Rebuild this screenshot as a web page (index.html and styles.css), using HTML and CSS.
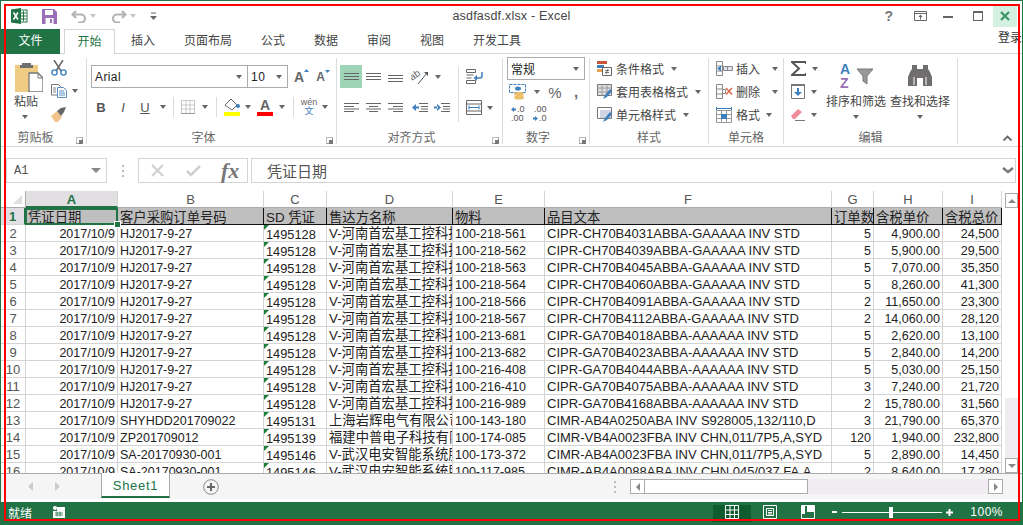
FILE: index.html
```html
<!DOCTYPE html>
<html lang="zh-CN">

<head>
  <meta charset="UTF-8">
  <title>asdfasdf.xlsx - Excel</title>
  <link rel="stylesheet" href="styles.css">
</head>

<body>
  <div class="window">
    <header class="titlebar">
      <div class="qat">
        <svg class="qat-excel" width="17" height="16" viewBox="0 0 17 16"><rect x="8" y="2" width="8" height="12" fill="#fff" stroke="#217346"/><path d="M10 5h5M10 8h5M10 11h5M12.5 3v10" stroke="#217346"/><path d="M0 1.5 10 0v16L0 14.500z" fill="#217346"/><path d="M2.500 4.500 7 11.500M7 4.500 2.500 11.500" stroke="#fff" stroke-width="1.600"/></svg>
        <svg class="qat-save" width="15" height="15" viewBox="0 0 15 15"><path d="M0 0h12l3 3v12H0z" fill="#9a6fb8"/><rect x="3" y="1" width="8" height="5" fill="#fff"/><rect x="3.500" y="9" width="8" height="6" fill="#fff"/><rect x="8" y="10" width="2" height="4" fill="#9a6fb8"/></svg>
        <svg class="qat-undo" width="16" height="13" viewBox="0 0 16 13"><path d="M5 1 1.500 4.500 5 8M2 4.500h8a4 4 0 0 1 0 8H7" fill="none" stroke="#b4b4b4" stroke-width="2.200"/></svg>
        <span class="tri tri-light"></span>
        <svg class="qat-redo" width="16" height="13" viewBox="0 0 16 13"><path d="M11 1l3.500 3.500L11 8M14 4.500H6a4 4 0 0 0 0 8h3" fill="none" stroke="#b4b4b4" stroke-width="2.200"/></svg>
        <span class="tri tri-light"></span>
        <svg class="qat-more" width="7" height="8" viewBox="0 0 7 8"><path d="M1 1h5" stroke="#666"/><path d="M0 4h7L3.500 8z" fill="#666"/></svg>
      </div>
      <div class="doc-title">asdfasdf.xlsx - Excel</div>
      <div class="win-btns">
        <span class="win-help">?</span>
        <svg class="win-icon" width="13" height="10" viewBox="0 0 13 10"><path d="M.5.500h12v9H.5zM1 2.500h11" fill="none" stroke="#666"/><path d="M6.500 3.500 4.500 6h4zM6 6h1v2.500H6z" fill="#666"/></svg>
        <span class="win-min"></span>
        <span class="win-max"></span>
        <span class="win-close">
          <svg width="10" height="10" viewBox="0 0 10 10"><path d="M1 1l8 8M9 1 1 9" stroke="#3f9463" stroke-width="2.200"/></svg>
        </span>
      </div>
    </header>

    <nav class="tabs">
      <div class="tab-file">文件</div>
      <div class="tab-active">开始</div>
      <div class="tab-list">
        <span>插入</span>
        <span>页面布局</span>
        <span>公式</span>
        <span>数据</span>
        <span>审阅</span>
        <span>视图</span>
        <span>开发工具</span>
      </div>
      <div class="login">登录</div>
    </nav>

    <section class="ribbon">
      <div class="group group-clip">
        <div class="group-body clip-body">
          <div class="paste">
            <svg width="29" height="30" viewBox="0 0 29 30"><path d="M1 3h23v27H1z" fill="#f0cb83"/><path d="M8 3V1h9v2h2v3H6V3z" fill="#6f6f6f"/><path d="M15 11h9l5 5v14H15z" fill="#fff" stroke="#777" stroke-width="1.300"/><path d="M24 11v5h5" fill="none" stroke="#777"/></svg>
            <span>粘贴</span>
            <i class="tri"></i>
          </div>
          <div class="clip-tools">
            <svg width="16" height="16" viewBox="0 0 16 16"><path d="M3 0l7 11M12 0 5 11" stroke="#666" stroke-width="1.500"/><circle cx="3.500" cy="12.500" r="2.600" fill="none" stroke="#3e7fbd" stroke-width="1.400"/><circle cx="12.500" cy="12.500" r="2.600" fill="none" stroke="#3e7fbd" stroke-width="1.400"/></svg>
            <div class="copy-row">
              <svg width="16" height="14" viewBox="0 0 16 14"><path d="M.5.500h7l2 2V11H.5z" fill="#fff" stroke="#777"/><path d="M6.500 3.500h6l3 3v7h-9z" fill="#fff" stroke="#5b8fc4"/><path d="M2 4h3M2 6h3M2 8h3" stroke="#888"/><path d="M8 7h5M8 9h6M8 11h6" stroke="#5b8fc4"/></svg>
              <i class="tri"></i>
            </div>
            <svg width="16" height="15" viewBox="0 0 16 15"><path d="M0 9l6-5 5 6-4 5H4z" fill="#f0c48a"/><path d="M6 4l4-3 5-1-2 5-3 4z" fill="#666"/></svg>
          </div>
        </div>
        <div class="group-label has-launcher">剪贴板<b class="launcher"></b></div>
      </div>

      <div class="group group-font">
        <div class="group-body">
          <div class="font-row1">
            <div class="combo font-name"><span>Arial</span><i class="tri"></i></div>
            <div class="combo font-size"><span>10</span><i class="tri"></i></div>
            <div class="grow-a">A<svg width="5" height="3" viewBox="0 0 5 3"><path d="M0 3h5L2.500 0z" fill="#3e7fbd"/></svg></div>
            <div class="shrink-a">A<svg width="5" height="3" viewBox="0 0 5 3"><path d="M0 0h5L2.500 3z" fill="#3e7fbd"/></svg></div>
          </div>
          <div class="font-row2">
            <span class="fmt-b">B</span>
            <span class="fmt-i">I</span>
            <span class="fmt-u">U</span>
            <i class="tri"></i>
            <b class="vdiv"></b>
            <svg width="14" height="14" viewBox="0 0 14 14"><path d="M.5.500h13v13H.5zM5 .5v13M9 .5v13M.5 5h13M.5 9h13" fill="none" stroke="#999" stroke-dasharray="1 1"/><path d="M0 13.500h14" stroke="#999"/></svg>
            <i class="tri"></i>
            <b class="vdiv"></b>
            <div class="fill-btn">
              <svg width="16" height="12" viewBox="0 0 16 12"><path d="M1 6l6-6 6 6-5 5z" fill="#fff" stroke="#666"/><circle cx="14" cy="7" r="2" fill="#3e7fbd"/></svg>
              <b class="swatch swatch-yellow"></b>
            </div>
            <i class="tri"></i>
            <div class="color-btn">
              <span>A</span>
              <b class="swatch swatch-red"></b>
            </div>
            <i class="tri"></i>
            <b class="vdiv"></b>
            <div class="wen"><span>wén</span><em>文</em></div>
            <i class="tri"></i>
          </div>
        </div>
        <div class="group-label has-launcher">字体<b class="launcher"></b></div>
      </div>

      <div class="group group-align">
        <div class="group-body align-body">
          <div class="align-left">
            <div class="align-row1">
              <span class="align-on"><svg width="15" height="7" viewBox="0 0 15 7"><path d="M0 .5h15M0 3.500h15M0 6.500h15" stroke="#666"/></svg></span>
              <svg width="15" height="7" viewBox="0 0 15 7"><path d="M0 .5h15M0 3.500h15M0 6.500h15" stroke="#666"/></svg>
              <svg class="align-low" width="15" height="7" viewBox="0 0 15 7"><path d="M0 .5h15M0 3.500h15M0 6.500h15" stroke="#666"/></svg>
              <svg width="17" height="15" viewBox="0 0 17 15"><text class="orient-text" transform="translate(1 12) rotate(-35)">ab</text><path d="M7 15 16 4" stroke="#555"/><path d="M13 3h4v4z" fill="#555"/></svg>
              <i class="tri"></i>
            </div>
            <div class="align-row2">
              <svg width="15" height="9" viewBox="0 0 15 9"><path d="M0 .5h15M0 3.500h10M0 6h15M0 8.500h10" stroke="#666"/></svg>
              <svg width="15" height="9" viewBox="0 0 15 9"><path d="M0 .5h15M3 3.500h9M0 6h15M3 8.500h9" stroke="#666"/></svg>
              <svg width="15" height="9" viewBox="0 0 15 9"><path d="M0 .5h15M5 3.500h10M0 6h15M5 8.500h10" stroke="#666"/></svg>
              <svg width="16" height="9" viewBox="0 0 16 9"><path d="M7 .5h9M9 3.500h7M9 6h7M7 8.500h9" stroke="#666"/><path d="M0 4.500 4 1v7zM3 3.500h4v2H3z" fill="#3e7fbd"/></svg>
              <svg width="16" height="9" viewBox="0 0 16 9"><path d="M7 .5h9M9 3.500h7M9 6h7M7 8.500h9" stroke="#666"/><path d="M7 4.500 3 1v7zM0 3.500h4v2H0z" fill="#3e7fbd"/></svg>
            </div>
          </div>
          <b class="vdiv vdiv-tall"></b>
          <div class="align-right">
            <svg width="17" height="15" viewBox="0 0 17 15"><path d="M.5.500h9v3h-9zM.5 6h7M.5 9h5M.5 11.500h9v3h-9z" fill="none" stroke="#666"/><path d="M16 3v4a2 2 0 0 1-2 2H9" fill="none" stroke="#3e7fbd" stroke-width="1.500"/><path d="M11 6 7.500 9l3.500 3z" fill="#3e7fbd"/></svg>
            <div class="merge-row">
              <svg width="16" height="15" viewBox="0 0 16 15"><path d="M.5.500h15v14H.5zM.5 4h15M.5 11h15" fill="none" stroke="#666"/><path d="M3 7.500h10" stroke="#3e7fbd"/><path d="M3 5.500v4M13 5.500v4" stroke="#3e7fbd"/></svg>
              <i class="tri"></i>
            </div>
          </div>
        </div>
        <div class="group-label has-launcher">对齐方式<b class="launcher"></b></div>
      </div>

      <div class="group group-number">
        <div class="group-body">
          <div class="combo num-format"><span>常规</span><i class="tri"></i></div>
          <div class="num-row1">
            <svg width="17" height="16" viewBox="0 0 17 16"><path d="M.5.500h16v8H.5z" fill="#fff" stroke="#3e7fbd" stroke-dasharray="3 1"/><ellipse cx="9" cy="4.500" rx="3" ry="2" fill="#3e7fbd"/><ellipse cx="10" cy="10" rx="5" ry="2" fill="#eebf6a"/><ellipse cx="10" cy="13.500" rx="5" ry="2" fill="#eebf6a"/></svg>
            <i class="tri"></i>
            <span class="pct">%</span>
            <span class="comma">,</span>
          </div>
          <div class="num-row2">
            <div class="dec"><svg width="5" height="5" viewBox="0 0 5 5"><path d="M0 2.500 3 0v1.500h2v2H3V5z" fill="#3e7fbd"/></svg><span>.0</span><span class="dec-low">.00</span></div>
            <div class="dec"><span class="dec-first">.00</span><svg width="5" height="5" viewBox="0 0 5 5"><path d="M5 2.500 2 0v1.500H0v2h2V5z" fill="#3e7fbd"/></svg><span>.0</span></div>
          </div>
        </div>
        <div class="group-label has-launcher">数字<b class="launcher"></b></div>
      </div>

      <div class="group group-styles">
        <div class="group-body">
          <div class="list-row">
            <svg width="15" height="15" viewBox="0 0 15 15"><path d="M0 0h10v3H0z" fill="#c8553a"/><path d="M0 4h7v3H0z" fill="#3e7fbd"/><path d="M0 8h5v3H0z" fill="#e6a050"/><path d="M5.500 6.500h9v8h-9z" fill="#fff" stroke="#666"/><path d="M8 9.500h4M8 11.500h4M11 8l-2 5" stroke="#555" stroke-width=".8"/></svg>
            <span>条件格式</span><i class="tri"></i>
          </div>
          <div class="list-row">
            <svg width="15" height="15" viewBox="0 0 15 15"><path d="M.5.500h14v11H.5z" fill="#dfdfe6" stroke="#777"/><path d="M5 .5v11M10 .5v11M.5 4h14M.5 8h14" stroke="#999"/><path d="M6 15l2-4 5-6 2 2-5 6z" fill="#3e7fbd"/></svg>
            <span>套用表格格式</span><i class="tri"></i>
          </div>
          <div class="list-row">
            <svg width="15" height="15" viewBox="0 0 15 15"><path d="M.5.500h14v11H.5z" fill="#fff" stroke="#777"/><path d="M3 3h11v8H3z" fill="#cfd3e4"/><path d="M6 15l2-4 5-6 2 2-5 6z" fill="#3e7fbd"/></svg>
            <span>单元格样式</span><i class="tri"></i>
          </div>
        </div>
        <div class="group-label">样式</div>
      </div>

      <div class="group group-cells">
        <div class="group-body">
          <div class="list-row">
            <svg width="17" height="15" viewBox="0 0 17 15"><path d="M.5.500h6v14h-6zM.5 5h6M.5 10h6" fill="none" stroke="#888"/><path d="M7.500 5.500h9v4h-9zM11.500 5.500v4" fill="#dfe4ec" stroke="#888"/><path d="M1 7.500 5 4.500v6z" fill="#3e7fbd"/></svg>
            <span>插入</span><i class="tri"></i>
          </div>
          <div class="list-row">
            <svg width="17" height="15" viewBox="0 0 17 15"><path d="M.5.500h6v14h-6zM.5 5h6M.5 10h6M6.500 5.500h3v4h-3z" fill="none" stroke="#888"/><path d="M10 4l6 6.500M16 4l-6 6.500" stroke="#e2694b" stroke-width="1.500"/></svg>
            <span>删除</span><i class="tri"></i>
          </div>
          <div class="list-row">
            <svg width="17" height="16" viewBox="0 0 17 16"><path d="M.5 0v3M15.500 0v3M1 1.500h14" stroke="#3e7fbd"/><path d="M.5 3.500h15v12H.5zM5.500 3.500v12M10.500 3.500v12M.5 7.500h15M.5 11.500h15" fill="none" stroke="#999"/><path d="M5 7h6v5H5z" fill="#3e7fbd"/></svg>
            <span>格式</span><i class="tri tri-near"></i>
          </div>
        </div>
        <div class="group-label">单元格</div>
      </div>

      <div class="group group-edit">
        <div class="group-body edit-body">
          <div class="edit-tools">
            <div class="edit-row"><svg width="15" height="15" viewBox="0 0 15 15"><path d="M15 3V1H1l7 6.500L1 14h14v-2" fill="none" stroke="#555" stroke-width="2"/></svg><i class="tri"></i></div>
            <div class="edit-row"><svg width="14" height="15" viewBox="0 0 14 15"><path d="M.5.500h13v14H.5z" fill="#fff" stroke="#777"/><path d="M0 0h14v2H0z" fill="#777"/><path d="M6 4h2v4h3l-4 4-4-4h3z" fill="#3e7fbd"/></svg><i class="tri"></i></div>
            <div class="edit-row"><svg width="14" height="13" viewBox="0 0 14 13"><path d="M0 8l7-7 4 3-7 7H2z" fill="#ee8c9c"/><path d="M4 12.500h10" stroke="#777"/></svg><i class="tri"></i></div>
          </div>
          <div class="big-btn big-sort">
            <svg width="31" height="28" viewBox="0 0 31 28"><path d="M15 7h16l-6 7v8l-4-3v-5z" fill="#999" stroke="#777"/></svg>
            <span class="sort-a">A</span>
            <span class="sort-z">Z</span>
            <span class="big-text">排序和筛选</span>
            <i class="tri"></i>
          </div>
          <div class="big-btn">
            <svg width="26" height="28" viewBox="0 0 26 28"><path d="M5 3h5v4h6V3h5v4l2 3 2 5v9h-9v-8h-6v8H1v-9l2-5 2-3z" fill="#706d6e"/><path d="M7 15v8M19 15v8" stroke="#fff"/></svg>
            <span class="big-text">查找和选择</span>
            <i class="tri"></i>
          </div>
        </div>
        <div class="group-label">编辑</div>
      </div>

      <svg class="collapse" width="9" height="6" viewBox="0 0 9 6"><path d="M.5 5.500l4-4 4 4" fill="none" stroke="#666" stroke-width="1.800"/></svg>
    </section>

    <section class="formula-bar">
      <div class="name-box"><span>A1</span><i class="tri tri-big"></i></div>
      <div class="dots"><b></b><b></b><b></b></div>
      <div class="fx-box">
        <svg width="13" height="13" viewBox="0 0 13 13"><path d="M1 1l11 11M12 1 1 12" stroke="#cfcfcf" stroke-width="2"/></svg>
        <svg width="15" height="12" viewBox="0 0 15 12"><path d="M1 6l4 4 9-9" fill="none" stroke="#cfcfcf" stroke-width="2.500"/></svg>
        <span class="fx">fx</span>
      </div>
      <div class="formula-input"><span>凭证日期</span><svg width="12" height="7" viewBox="0 0 12 7"><path d="M1 1l5 4 5-4" fill="none" stroke="#777" stroke-width="2.500"/></svg></div>
    </section>

    <section class="sheet-area">
      <table class="sheet">
        <thead>
          <tr><th class="corner"></th><th class="col-on">A</th><th>B</th><th>C</th><th>D</th><th>E</th><th>F</th><th>G</th><th>H</th><th>I</th></tr>
        </thead>
        <tbody>
          <tr class="title-row"><th class="row-on">1</th><td class="sel">凭证日期</td><td>客户采购订单号码</td><td>SD 凭证</td><td>售达方名称</td><td>物料</td><td>品目文本</td><td>订单数</td><td>含税单价</td><td>含税总价</td></tr>
          <tr><th>2</th><td class="r">2017/10/9</td><td>HJ2017-9-27</td><td class="flag">1495128</td><td>V-河南首宏基工控科技有限公司</td><td>100-218-561</td><td>CIPR-CH70B4031ABBA-GAAAAA INV STD</td><td class="r">5</td><td class="r">4,900.00</td><td class="r">24,500</td></tr>
          <tr><th>3</th><td class="r">2017/10/9</td><td>HJ2017-9-27</td><td class="flag">1495128</td><td>V-河南首宏基工控科技有限公司</td><td>100-218-562</td><td>CIPR-CH70B4039ABBA-GAAAAA INV STD</td><td class="r">5</td><td class="r">5,900.00</td><td class="r">29,500</td></tr>
          <tr><th>4</th><td class="r">2017/10/9</td><td>HJ2017-9-27</td><td class="flag">1495128</td><td>V-河南首宏基工控科技有限公司</td><td>100-218-563</td><td>CIPR-CH70B4045ABBA-GAAAAA INV STD</td><td class="r">5</td><td class="r">7,070.00</td><td class="r">35,350</td></tr>
          <tr><th>5</th><td class="r">2017/10/9</td><td>HJ2017-9-27</td><td class="flag">1495128</td><td>V-河南首宏基工控科技有限公司</td><td>100-218-564</td><td>CIPR-CH70B4060ABBA-GAAAAA INV STD</td><td class="r">5</td><td class="r">8,260.00</td><td class="r">41,300</td></tr>
          <tr><th>6</th><td class="r">2017/10/9</td><td>HJ2017-9-27</td><td class="flag">1495128</td><td>V-河南首宏基工控科技有限公司</td><td>100-218-566</td><td>CIPR-CH70B4091ABBA-GAAAAA INV STD</td><td class="r">2</td><td class="r">11,650.00</td><td class="r">23,300</td></tr>
          <tr><th>7</th><td class="r">2017/10/9</td><td>HJ2017-9-27</td><td class="flag">1495128</td><td>V-河南首宏基工控科技有限公司</td><td>100-218-567</td><td>CIPR-CH70B4112ABBA-GAAAAA INV STD</td><td class="r">2</td><td class="r">14,060.00</td><td class="r">28,120</td></tr>
          <tr><th>8</th><td class="r">2017/10/9</td><td>HJ2017-9-27</td><td class="flag">1495128</td><td>V-河南首宏基工控科技有限公司</td><td>100-213-681</td><td>CIPR-GA70B4018ABBA-AAAAAA INV STD</td><td class="r">5</td><td class="r">2,620.00</td><td class="r">13,100</td></tr>
          <tr><th>9</th><td class="r">2017/10/9</td><td>HJ2017-9-27</td><td class="flag">1495128</td><td>V-河南首宏基工控科技有限公司</td><td>100-213-682</td><td>CIPR-GA70B4023ABBA-AAAAAA INV STD</td><td class="r">5</td><td class="r">2,840.00</td><td class="r">14,200</td></tr>
          <tr><th>10</th><td class="r">2017/10/9</td><td>HJ2017-9-27</td><td class="flag">1495128</td><td>V-河南首宏基工控科技有限公司</td><td>100-216-408</td><td>CIPR-GA70B4044ABBA-AAAAAA INV STD</td><td class="r">5</td><td class="r">5,030.00</td><td class="r">25,150</td></tr>
          <tr><th>11</th><td class="r">2017/10/9</td><td>HJ2017-9-27</td><td class="flag">1495128</td><td>V-河南首宏基工控科技有限公司</td><td>100-216-410</td><td>CIPR-GA70B4075ABBA-AAAAAA INV STD</td><td class="r">3</td><td class="r">7,240.00</td><td class="r">21,720</td></tr>
          <tr><th>12</th><td class="r">2017/10/9</td><td>HJ2017-9-27</td><td class="flag">1495128</td><td>V-河南首宏基工控科技有限公司</td><td>100-216-989</td><td>CIPR-GA70B4168ABBA-AAAAAA INV STD</td><td class="r">2</td><td class="r">15,780.00</td><td class="r">31,560</td></tr>
          <tr><th>13</th><td class="r">2017/10/9</td><td>SHYHDD201709022</td><td class="flag">1495131</td><td>上海岩辉电气有限公司</td><td>100-143-180</td><td>CIMR-AB4A0250ABA INV S928005,132/110,D</td><td class="r">3</td><td class="r">21,790.00</td><td class="r">65,370</td></tr>
          <tr><th>14</th><td class="r">2017/10/9</td><td>ZP201709012</td><td class="flag">1495139</td><td>福建中普电子科技有限公司</td><td>100-174-085</td><td>CIMR-VB4A0023FBA INV CHN,011/7P5,A,SYD</td><td class="r">120</td><td class="r">1,940.00</td><td class="r">232,800</td></tr>
          <tr><th>15</th><td class="r">2017/10/9</td><td>SA-20170930-001</td><td class="flag">1495146</td><td>V-武汉电安智能系统股份有限公司</td><td>100-173-372</td><td>CIMR-AB4A0023FBA INV CHN,011/7P5,A,SYD</td><td class="r">5</td><td class="r">2,890.00</td><td class="r">14,450</td></tr>
          <tr><th>16</th><td class="r">2017/10/9</td><td>SA-20170930-001</td><td class="flag">1495146</td><td>V-武汉电安智能系统股份有限公司</td><td>100-117-985</td><td>CIMR-AB4A0088ABA INV CHN,045/037,FA,A</td><td class="r">2</td><td class="r">8,640.00</td><td class="r">17,280</td></tr>
        </tbody>
      </table>
      <div class="vscroll">
        <div class="scroll-btn"><i class="tri-up"></i></div>
        <div class="vthumb"></div>
        <div class="vtrack"></div>
        <div class="scroll-btn"><i class="tri"></i></div>
      </div>
    </section>

    <section class="tab-bar">
      <div class="nav-arrows">
        <svg width="5" height="9" viewBox="0 0 5 9"><path d="M5 0v9L0 4.500z" fill="#ccc"/></svg>
        <svg width="5" height="9" viewBox="0 0 5 9"><path d="M0 0v9l5-4.500z" fill="#ccc"/></svg>
      </div>
      <div class="sheet-tab">Sheet1</div>
      <div class="add-sheet">
        <svg width="16" height="16" viewBox="0 0 16 16"><circle cx="8" cy="8" r="7.300" fill="none" stroke="#8a8a8a"/><path d="M4 8h8M8 4v8" stroke="#666" stroke-width="2"/></svg>
      </div>
      <div class="dots dots-tab"><b></b><b></b><b></b></div>
      <div class="hscroll">
        <div class="scroll-btn"><i class="tri-left"></i></div>
        <div class="hthumb"></div>
        <div class="htrack"></div>
        <div class="scroll-btn"><i class="tri-right"></i></div>
      </div>
    </section>

    <footer class="status">
      <span>就绪</span>
      <svg class="macro" width="12" height="12" viewBox="0 0 12 12"><path d="M4 1h8v11H0V5h4z" fill="#fff"/><circle cx="2" cy="2" r="2" fill="#fff"/><path d="M2 7h8M2 9h8M4 5.500v5M7 5.500v5" stroke="#217346" stroke-width=".8"/></svg>
      <div class="status-right">
        <div class="view-btn view-on"><svg width="14" height="14" viewBox="0 0 14 14"><path d="M.5.500h13v13H.5zM5 .5v13M9.500.5v13M.5 5h13M.5 9.500h13" fill="none" stroke="#fff"/></svg></div>
        <div class="view-btn"><svg width="14" height="14" viewBox="0 0 14 14"><path d="M.5.500h13v13H.5zM3.500 3.500h7v7h-7zM5 5.500h4M5 7.500h4M5 9h4" fill="none" stroke="#fff"/></svg></div>
        <div class="view-btn"><svg width="14" height="14" viewBox="0 0 14 14"><path d="M.5.500h13v13H.5z" fill="none" stroke="#fff"/><path d="M1 1h3v8H1zM6 1h7v6H6z" fill="#fff"/></svg></div>
        <b class="zoom-minus"></b>
        <div class="zoom-slider"><b></b></div>
        <svg width="7" height="7" viewBox="0 0 7 7"><path d="M0 3.500h7M3.500 0v7" stroke="#fff" stroke-width="2"/></svg>
        <span class="zoom-val">100%</span>
      </div>
    </footer>

    <div class="red-box"></div>
  </div>
</body>

</html>
```

FILE: styles.css
```css
* {
  box-sizing: border-box;
}

body {
  margin: 0;
  font-family: 'Liberation Sans', 'Noto Sans CJK SC', sans-serif;
  font-size: 12px;
  color: #444;
  background: #fff;
}

svg {
  display: block;
  flex: none;
}

i,
em {
  font-style: normal;
}

.window {
  position: relative;
  width: 1023px;
  height: 525px;
  border: 1px solid #217346;
  border-bottom: 0;
  overflow: hidden;
  display: flex;
  flex-direction: column;
}

/* small dropdown arrow, used everywhere */
.tri {
  display: block;
  width: 0;
  height: 0;
  flex: none;
  border-left: 3.5px solid transparent;
  border-right: 3.5px solid transparent;
  border-top: 4px solid #666;
}

.tri-light {
  border-top-color: #c6c6c6;
}

.tri-big {
  border-left-width: 5px;
  border-right-width: 5px;
  border-top-width: 5px;
  border-top-color: #888;
}

/* title bar */
.titlebar {
  height: 28px;
  display: grid;
  grid-template-columns: 1fr auto 1fr;
  align-items: center;
  flex: none;
}

.qat {
  display: flex;
  align-items: center;
  padding-left: 10px;
  padding-top: 2px;
}

.qat-save {
  margin-left: 14px;
}

.qat-undo {
  margin-left: 14px;
}

.qat .tri-light {
  margin-left: 3px;
}

.qat-redo {
  margin-left: 15px;
}

.qat-more {
  margin-left: 14px;
}

.doc-title {
  font-size: 12.5px;
  letter-spacing: .2px;
  color: #444;
  padding-top: 2px;
}

.win-btns {
  display: flex;
  align-items: center;
  justify-content: flex-end;
  padding-right: 5px;
  padding-top: 2px;
}

.win-help {
  font-weight: bold;
  font-size: 14px;
  color: #777;
}

.win-icon {
  margin-left: 21px;
}

.win-min {
  width: 10px;
  height: 2px;
  background: #666;
  margin-left: 16px;
  margin-top: 2px;
}

.win-max {
  width: 10px;
  height: 10px;
  border: 1px solid #666;
  border-top-width: 2px;
  margin-left: 20px;
}

.win-close {
  width: 24px;
  height: 21px;
  margin-left: 10px;
  background: #d3f0e0;
  display: flex;
  align-items: center;
  justify-content: center;
}

/* ribbon tabs */
.tabs {
  height: 25px;
  display: flex;
  align-items: stretch;
  flex: none;
  position: relative;
  border-bottom: 1px solid #d4d4d4;
  line-height: 25px;
}

.tab-file {
  width: 59px;
  height: 25px;
  background: #217346;
  color: #fff;
  text-align: center;
}

.tab-active {
  width: 51px;
  height: 25px;
  margin-left: 4px;
  border: 1px solid #d4d4d4;
  border-bottom: 0;
  background: #fff;
  color: #217346;
  text-align: center;
}

.tab-list {
  display: flex;
  gap: 29px;
  margin-left: 16px;
}

.login {
  margin-left: auto;
  color: #333;
  margin-top: -3px;
}

/* ribbon body */
.ribbon {
  height: 93px;
  display: flex;
  flex: none;
  padding-top: 4px;
  border-bottom: 1px solid #d4d4d4;
}

.group {
  height: 86px;
  border-right: 1px solid #dcdcdc;
  display: flex;
  flex-direction: column;
  position: relative;
  flex: none;
}

.group-clip {
  width: 86px;
}

.group-font {
  width: 250px;
}

.group-align {
  width: 166px;
}

.group-number {
  width: 87px;
}

.group-styles {
  width: 119px;
}

.group-cells {
  width: 75px;
}

.group-edit {
  width: 174px;
}

.group-body {
  height: 72px;
  flex: none;
}

.group-label {
  text-align: center;
  color: #666;
  line-height: 16px;
}

.has-launcher {
  padding-right: 16px;
}

.launcher {
  position: absolute;
  right: 3px;
  bottom: 0;
  width: 7px;
  height: 7px;
  border: 1px solid #999;
  border-top-color: #bbb;
  border-left-color: #bbb;
}

.launcher::after {
  content: '';
  position: absolute;
  right: -1px;
  bottom: -1px;
  width: 4px;
  height: 4px;
  background: #777;
}

.vdiv {
  display: block;
  width: 1px;
  height: 20px;
  background: #dcdcdc;
}

/* clipboard */
.clip-body {
  display: flex;
  padding: 4px 0 0 13px;
}

.paste {
  width: 37px;
  display: flex;
  flex-direction: column;
}

.paste span {
  line-height: 16px;
  margin-top: 2px;
}

.paste .tri {
  margin: 5px 0 0 8px;
}

.clip-tools {
  display: flex;
  flex-direction: column;
  margin-top: -2px;
}

.copy-row {
  display: flex;
  align-items: center;
  gap: 5px;
  margin-top: 8px;
}

.clip-tools > svg:last-child {
  margin-top: 9px;
}

/* font */
.combo {
  display: flex;
  align-items: center;
  justify-content: space-between;
  border: 1px solid #ababab;
  height: 23px;
  padding: 0 5px 0 3px;
  color: #222;
}

.font-row1 {
  display: flex;
  align-items: center;
  padding: 7px 0 0 4px;
}

.font-name {
  width: 157px;
  letter-spacing: .4px;
}

.font-size {
  width: 40px;
  border-left: 0;
  letter-spacing: .5px;
}

.grow-a,
.shrink-a {
  display: flex;
  align-items: flex-start;
  color: #666;
  font-weight: bold;
}

.grow-a {
  font-size: 14px;
  margin-left: 6px;
}

.shrink-a {
  font-size: 12px;
  margin-left: 7px;
}

.font-row2 {
  display: grid;
  grid-template-columns: 22px 22px 22px 14px 6px 24px 10px 12px 20px 12px 22px 12px 10px 22px 10px;
  align-items: center;
  justify-items: center;
  height: 22px;
  margin: 8px 0 0 3px;
}

.fmt-b,
.fmt-i,
.fmt-u {
  color: #555;
  font-size: 13px;
}

.fmt-b {
  font-weight: bold;
}

.fmt-i {
  font-style: italic;
}

.fmt-u {
  text-decoration: underline;
}

.fill-btn,
.color-btn {
  display: flex;
  flex-direction: column;
  align-items: center;
  line-height: 13px;
}

.color-btn span {
  font-weight: bold;
  font-size: 14px;
  color: #666;
}

.swatch {
  display: block;
  height: 4px;
  width: 16px;
}

.swatch-yellow {
  background: #ffff00;
  margin-top: 1px;
}

.swatch-red {
  background: #ff0000;
}

.wen {
  display: flex;
  flex-direction: column;
  align-items: center;
  font-size: 9px;
  line-height: 9px;
  color: #666;
}

.wen em {
  color: #3e7fbd;
  font-size: 9px;
}

/* alignment */
.align-body {
  display: flex;
  padding: 7px 0 0 3px;
}

.align-left {
  width: 118px;
}

.align-row1 {
  display: grid;
  grid-template-columns: 22px 22px 22px 27px 10px;
  height: 23px;
  align-items: center;
  justify-items: center;
}

.align-on {
  width: 22px;
  height: 23px;
  background: #9fd5b7;
  display: flex;
  align-items: center;
  justify-content: center;
}

.align-low {
  margin-top: 4px;
}

.orient-text {
  font-size: 10px;
  fill: #666;
}

.align-row2 {
  display: grid;
  grid-template-columns: 22px 22px 22px 28px 16px;
  height: 22px;
  margin-top: 8px;
  align-items: center;
  justify-items: center;
}

.vdiv-tall {
  height: 55px;
  margin-top: 2px;
}

.align-right {
  margin-left: 7px;
  padding-top: 4px;
}

.merge-row {
  display: flex;
  align-items: center;
  gap: 5px;
  margin-top: 16px;
}

/* number */
.num-format {
  width: 78px;
  margin: -1px 0 0 4px;
}

.num-row1 {
  display: grid;
  grid-template-columns: 22px 17px 20px 22px;
  height: 20px;
  margin: 2px 0 0 3px;
  align-items: center;
  justify-items: center;
}

.pct {
  font-size: 15px;
  color: #666;
}

.comma {
  font-weight: bold;
  font-size: 15px;
  line-height: 10px;
  color: #666;
}

.num-row2 {
  display: flex;
  gap: 7px;
  margin: 3px 0 0 8px;
}

.dec {
  display: grid;
  grid-template-columns: 6px 9px;
  font-size: 9px;
  line-height: 9px;
  color: #555;
  align-items: center;
}

.dec-low {
  grid-column: 1 / 3;
}

.dec-first {
  grid-column: 1 / 3;
  padding-left: 1px;
}

/* styles + cells lists */
.list-row {
  display: flex;
  align-items: center;
  height: 23px;
  padding-left: 7px;
  gap: 4px;
  color: #444;
  white-space: nowrap;
}

.list-row .tri {
  margin-left: 3px;
}

.group-styles .group-body,
.group-cells .group-body {
  margin-top: -1px;
  margin-bottom: 1px;
}

.group-cells .list-row {
  gap: 3px;
}

.group-cells .list-row .tri {
  margin-left: 9px;
}

.group-cells .list-row .tri-near {
  margin-left: 3px;
}

/* editing */
.edit-body {
  display: flex;
}

.edit-tools {
  width: 42px;
  padding: 0 0 0 7px;
  margin-top: -1px;
}

.edit-row {
  display: flex;
  align-items: center;
  gap: 6px;
  height: 23px;
}

.big-btn {
  position: relative;
  width: 60px;
  display: flex;
  flex-direction: column;
  align-items: center;
  margin-right: 4px;
  padding-top: 4px;
}

.big-sort > svg {
  margin-left: 3px;
}

.sort-a,
.sort-z {
  position: absolute;
  left: 14px;
  font-weight: bold;
  font-size: 14px;
  line-height: 14px;
}

.sort-a {
  top: 4px;
  color: #3e7fbd;
}

.sort-z {
  top: 18px;
  color: #9a6fb8;
}

.big-text {
  line-height: 16px;
  margin-top: 4px;
  white-space: nowrap;
}

.big-btn .tri {
  margin-top: 5px;
}

.collapse {
  align-self: flex-end;
  margin: 0 0 5px 45px;
}

/* formula bar */
.formula-bar {
  height: 25px;
  margin-top: 11px;
  padding: 0 6px 0 5px;
  display: flex;
  flex: none;
}

.name-box {
  width: 101px;
  border: 1px solid #d4d4d4;
  display: flex;
  align-items: center;
  justify-content: space-between;
  padding: 0 5px 0 7px;
  font-family: 'Liberation Mono', monospace;
  color: #555;
}

.dots {
  width: 31px;
  display: flex;
  flex-direction: column;
  align-items: center;
  justify-content: center;
  gap: 3px;
}

.dots b {
  width: 2px;
  height: 2px;
  background: #bbb;
}

.fx-box {
  width: 110px;
  border: 1px solid #d4d4d4;
  display: flex;
  align-items: center;
  padding-left: 12px;
  gap: 22px;
}

.fx {
  font-family: 'Liberation Serif', serif;
  font-style: italic;
  font-weight: bold;
  font-size: 22px;
  color: #777;
  margin-left: -2px;
}

.formula-input {
  flex: 1;
  margin-left: 3px;
  border: 1px solid #d4d4d4;
  display: flex;
  align-items: center;
  justify-content: space-between;
  padding: 0 1px 0 15px;
  font-size: 15px;
  color: #555;
}

/* the grid: table markup, but rows are fixed 17px grids so CJK cells can't stretch them */
.sheet-area {
  height: 283px;
  margin-top: 8px;
  display: flex;
  flex: none;
  overflow: hidden;
  border-bottom: 1px solid #ababab;
}

.sheet,
.sheet thead,
.sheet tbody {
  display: block;
}

.sheet {
  width: 1001px;
  flex: none;
  font-size: 12.5px;
  color: #222;
}

.sheet tr {
  display: grid;
  grid-template-columns: 25px 92px 146px 63px 126px 92px 287px 42px 69px 59px;
  height: 17px;
}

.sheet th,
.sheet td {
  display: block;
  height: 17px;
  padding: 0;
  line-height: 18px;
  white-space: nowrap;
  overflow: hidden;
  border-right: 1px solid #d4d4d4;
  border-bottom: 1px solid #d4d4d4;
  font-weight: normal;
}

.sheet td {
  padding-left: 2px;
}

.sheet td:nth-child(5) {
  font-size: 13.33px;
}

.sheet td:nth-child(7) {
  font-size: 13px;
}

.sheet thead th {
  color: #555;
  font-size: 13px;
  line-height: 17px;
  border-bottom-color: #ababab;
}

.sheet tbody th {
  color: #555;
  font-size: 13px;
}

.sheet .corner {
  position: relative;
  border-right-color: #ababab;
}

.corner::after {
  content: '';
  position: absolute;
  right: 3px;
  bottom: 3px;
  border-left: 9px solid transparent;
  border-bottom: 9px solid #dfdfdf;
}

.sheet .col-on {
  background: #e1dfe1;
  color: #217346;
  font-weight: bold;
  border-bottom: 2px solid #217346;
}

.sheet .title-row td {
  background: #c0bfc0;
  border-right-color: #111;
  border-bottom-color: #111;
  font-size: 13.33px;
  line-height: 19px;
}

.sheet .row-on {
  background: #e1dfe1;
  color: #217346;
  font-weight: bold;
  border-right: 2px solid #217346;
}

.sheet .sel {
  position: relative;
  overflow: visible;
}

.sel::after {
  content: '';
  position: absolute;
  inset: 0 -1px -1px -1px;
  border: 2px solid #217346;
}

.sel::before {
  content: '';
  position: absolute;
  right: -3px;
  bottom: -3px;
  width: 5px;
  height: 5px;
  background: #217346;
  outline: 1px solid #fff;
  z-index: 1;
}

.sheet .r {
  text-align: right;
  padding: 0 2px 0 0;
}

.sheet .flag {
  position: relative;
  line-height: 19px;
  font-size: 12.8px;
}

.flag::before {
  content: '';
  position: absolute;
  left: 0;
  top: 0;
  border-top: 5px solid #1a7f37;
  border-right: 5px solid transparent;
}

/* scrollbars */
.scroll-btn {
  width: 13px;
  height: 15px;
  border: 1px solid #ababab;
  background: #fff;
  display: flex;
  align-items: center;
  justify-content: center;
  flex: none;
}

.tri-up {
  border-left: 4px solid transparent;
  border-right: 4px solid transparent;
  border-bottom: 4px solid #888;
}

.scroll-btn .tri {
  border-left-width: 4px;
  border-right-width: 4px;
  border-top-color: #888;
}

.tri-left,
.tri-right {
  border-top: 4px solid transparent;
  border-bottom: 4px solid transparent;
}

.tri-left {
  border-right: 4px solid #888;
}

.tri-right {
  border-left: 4px solid #888;
}

.vscroll {
  width: 13px;
  margin: 2px 0 0 3px;
  height: 280px;
  display: flex;
  flex-direction: column;
  flex: none;
}

.vthumb {
  height: 190px;
  background: #fff;
  flex: none;
}

.vtrack {
  flex: 1;
  background: #f0ecf1;
}

.tab-bar {
  height: 25px;
  background: #f5f5f5;
  display: flex;
  align-items: center;
  flex: none;
}

.nav-arrows {
  display: flex;
  justify-content: space-between;
  width: 32px;
  margin-left: 27px;
}

.sheet-tab {
  width: 69px;
  height: 25px;
  margin: -1px 0 0 41px;
  align-self: flex-start;
  background: #fff;
  color: #217346;
  border: 1px solid #ababab;
  border-top: 0;
  border-bottom: 2px solid #217346;
  text-align: center;
  font-size: 13px;
  line-height: 26px;
  letter-spacing: .7px;
}

.add-sheet {
  width: 82px;
  display: flex;
  justify-content: center;
}

.dots-tab {
  margin-left: auto;
}

.hscroll {
  display: flex;
  width: 373px;
  height: 15px;
  margin-right: 19px;
}

.hscroll .scroll-btn {
  width: 15px;
}

.hthumb {
  width: 163px;
  background: #fff;
  border: 1px solid #ababab;
  border-left: 0;
}

.htrack {
  flex: 1;
  background: #f0ecf1;
}

/* status bar */
.status {
  margin-top: 3px;
  flex: 1;
  background: #217346;
  color: #fff;
  display: flex;
  align-items: center;
  padding: 0 0 3px 7px;
}

.macro {
  margin-left: 21px;
}

.status-right {
  margin-left: auto;
  display: flex;
  align-items: center;
  align-self: stretch;
  padding-right: 19px;
}

.view-btn {
  width: 38px;
  display: flex;
  align-items: center;
  justify-content: center;
}

.view-on {
  background: #0f5c31;
  margin-bottom: -3px;
  padding-bottom: 3px;
}

.zoom-minus {
  width: 5px;
  height: 2px;
  background: #fff;
  margin: 0 5px 0 5px;
}

.zoom-slider {
  width: 100px;
  height: 1px;
  background: #fff;
  position: relative;
  margin-right: 4px;
}

.zoom-slider b {
  position: absolute;
  left: 47px;
  top: -5px;
  width: 4px;
  height: 11px;
  background: #fff;
}

.zoom-val {
  margin-left: 17px;
  letter-spacing: .5px;
}

/* red annotation rectangle drawn over the screenshot */
.red-box {
  position: absolute;
  left: 3px;
  top: 3px;
  width: 1016px;
  height: 517px;
  border: 2px solid #ff0000;
  pointer-events: none;
}
```
